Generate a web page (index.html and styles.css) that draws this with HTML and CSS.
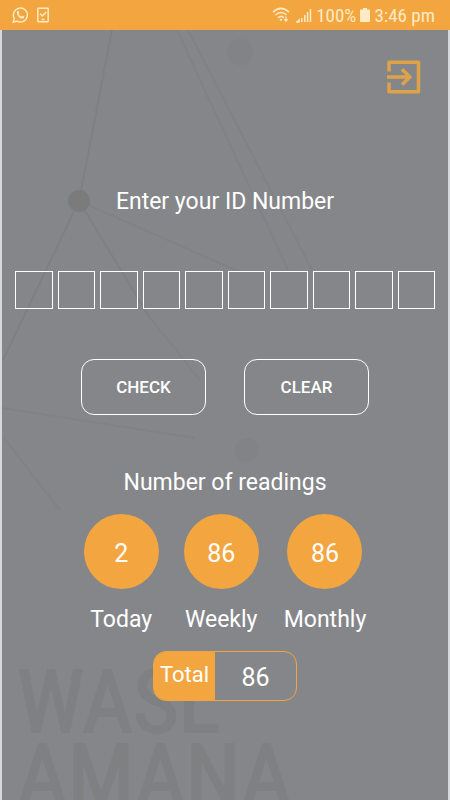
FILE: index.html
```html
<!DOCTYPE html>
<html lang="en">
<head>
<meta charset="utf-8">
<meta name="viewport" content="width=device-width, initial-scale=1">
<title>ID Check</title>
<link rel="stylesheet" href="styles.css">
</head>
<body>
<header class="status">
  <div class="status-group">
    <svg class="icon-chat" viewBox="0 0 18 18" fill="none" stroke="currentColor" stroke-width="1.5">
      <path d="M1.3 16.7l1.1-4.1a7.4 7.4 0 1 1 2.9 2.9z"/>
      <path d="M5.3 5.2c.5-.8 1.400-.8 1.700-.1l.7 1.600c.1.400-.7 1-.6 1.300.6 1.200 1.500 2 2.700 2.500.400.1.900-1 1.300-.8l1.600.8c.7.5-.2 1.900-1.100 2.200-3 .7-7.200-3.900-6.300-7.500z" fill="currentColor" stroke="none"/>
    </svg>
    <svg class="icon-task" viewBox="0 0 12 16" fill="none" stroke="currentColor" stroke-width="1.500">
      <rect x=".8" y="1.300" width="10.400" height="13.400" rx=".6"/>
      <path d="M3.200 6.800l2.200 2.200 3.800-4M4.500 12.500h3"/>
    </svg>
  </div>
  <div class="status-group status-right">
    <svg class="icon-wifi" viewBox="0 0 20 16" fill="none" stroke="currentColor" stroke-width="1.500">
      <path d="M1 5.200Q9 -2.400 17 5.200M3.500 8Q9 2.900 14.500 8M6 10.700Q9 8 12 10.700"/>
      <path d="M7.400 12.300q1.600-1.300 3.200 0L9 14.200zM11.700 12h4.600L14 15.200z" fill="currentColor" stroke="none"/>
      <path d="M14 12V9.500" stroke-width="1.200"/>
    </svg>
    <svg class="icon-signal" viewBox="0 0 16 16" fill="none" stroke="currentColor" stroke-width="1.500">
      <path d="M1 15l2-2v2zM5.800 15v-4M8.800 15V8M11.600 15V5M14.500 15V2"/>
    </svg>
    <span>100%</span>
    <svg class="icon-battery" viewBox="0 0 10 16" fill="currentColor">
      <path d="M3 1h4v1.500h2q1 0 1 1V14q0 1-1 1H1q-1 0-1-1V3.500q0-1 1-1h2z"/>
    </svg>
    <span>3:46 pm</span>
  </div>
</header>
<main class="screen">
  <svg class="backdrop" viewBox="0 0 450 770" preserveAspectRatio="xMinYMin slice" aria-hidden="true">
    <g class="mesh">
      <path d="M112 0L79 171L3 330M79 171L148 285"/>
      <path class="faint-line" d="M79 171L240 242M148 285L200 350M177 0L288 240M188 0L312 240M2 378L195 408M4 408L60 480"/>
      <circle cx="79" cy="171" r="11"/>
      <circle class="faint" cx="240" cy="22" r="13"/>
      <circle class="faint" cx="247" cy="420" r="12"/>
    </g>
    <text class="brand" x="17" y="702">WASL</text>
    <text class="brand" x="17" y="776">AMANA</text>
  </svg>
  <button class="exit" type="button" aria-label="Exit">
    <svg viewBox="0 0 34 34" fill="none" stroke="currentColor" stroke-width="3.500" stroke-linejoin="round">
      <path d="M2 11.500V2.200H31.500V31.800H2V22.500"/>
      <path d="M0 17H22.500M15 9.200L22.800 17L15 24.800" stroke-linejoin="miter"/>
    </svg>
  </button>
  <form class="form">
    <h1 class="heading" id="id-label">Enter your ID Number</h1>
    <div class="digits" role="group" aria-labelledby="id-label">
      <input class="digit" aria-label="Digit 1" inputmode="numeric" maxlength="1">
      <input class="digit" aria-label="Digit 2" inputmode="numeric" maxlength="1">
      <input class="digit" aria-label="Digit 3" inputmode="numeric" maxlength="1">
      <input class="digit" aria-label="Digit 4" inputmode="numeric" maxlength="1">
      <input class="digit" aria-label="Digit 5" inputmode="numeric" maxlength="1">
      <input class="digit" aria-label="Digit 6" inputmode="numeric" maxlength="1">
      <input class="digit" aria-label="Digit 7" inputmode="numeric" maxlength="1">
      <input class="digit" aria-label="Digit 8" inputmode="numeric" maxlength="1">
      <input class="digit" aria-label="Digit 9" inputmode="numeric" maxlength="1">
      <input class="digit" aria-label="Digit 10" inputmode="numeric" maxlength="1">
    </div>
    <div class="actions">
      <button class="action" type="button">CHECK</button>
      <button class="action" type="reset">CLEAR</button>
    </div>
  </form>
  <section class="readings">
    <h2 class="heading">Number of readings</h2>
    <div class="stats">
      <div class="stat"><span class="count">2</span><span class="label">Today</span></div>
      <div class="stat"><span class="count">86</span><span class="label">Weekly</span></div>
      <div class="stat"><span class="count">86</span><span class="label">Monthly</span></div>
    </div>
    <div class="total">
      <span class="total-label">Total</span>
      <span class="total-value">86</span>
    </div>
  </section>
</main>
</body>
</html>
```
FILE: styles.css
```css
* {
  box-sizing: border-box;
}

body {
  margin: 0;
  min-height: 100vh;
  display: flex;
  flex-direction: column;
  font-family: Roboto, "Liberation Sans", sans-serif;
  color: #fff;
  background: #85868a;
}

.status {
  height: 30px;
  padding: 0 15px 0 12px;
  display: flex;
  align-items: center;
  justify-content: space-between;
  background: #f3a63f;
  color: #fdebc8;
  font-family: "Roboto Condensed", Roboto, sans-serif;
  font-size: 19px;
}

.status-group {
  display: flex;
  align-items: center;
  gap: 8px;
}

.status-right {
  gap: 4px;
}

.icon-chat {
  width: 17px;
  height: 18px;
}

.icon-task {
  width: 12px;
  height: 16px;
}

.icon-wifi {
  width: 20px;
  height: 16px;
}

.icon-signal {
  width: 16px;
  height: 16px;
}

.icon-battery {
  width: 10px;
  height: 16px;
}

.screen {
  position: relative;
  flex: 1;
  display: flex;
  flex-direction: column;
  padding: 30px 13px 0;
  border: solid #d5d8dc;
  border-width: 0 2px;
  overflow: hidden;
}

.backdrop {
  position: absolute;
  top: 0;
  left: -2px;
  width: calc(100% + 4px);
  height: 100%;
}

.mesh {
  fill: #7b7b7c;
  stroke: #7f8083;
  stroke-width: 2;
}

.mesh path {
  fill: none;
}

.mesh .faint-line {
  stroke: #818286;
}

.mesh circle {
  stroke: none;
}

.mesh .faint {
  fill: #828387;
}

.brand {
  fill: #7f8082;
  stroke: #7f8082;
  stroke-width: 2;
  stroke-linejoin: round;
  font-family: "Liberation Sans Narrow", "Roboto Condensed", "Liberation Sans", sans-serif;
  font-size: 88px;
}

.exit,
.form,
.readings {
  position: relative;
}

.exit {
  align-self: flex-end;
  width: 34px;
  height: 34px;
  margin-right: 14px;
  padding: 0;
  border: 0;
  background: none;
  color: #dea249;
}

.exit svg {
  display: block;
}

.heading {
  margin: 0;
  font-size: 23px;
  font-weight: 400;
  line-height: 28px;
  text-align: center;
}

.form {
  margin-top: 94px;
}

.digits {
  display: flex;
  gap: 5px;
  margin-top: 55px;
}

.digit {
  flex: 1;
  min-width: 0;
  height: 38px;
  padding: 0;
  border: 1px solid #fff;
  border-radius: 0;
  background: none;
  color: #fff;
  font: 23px Roboto, sans-serif;
  text-align: center;
}

.actions {
  display: flex;
  justify-content: center;
  gap: 38px;
  margin-top: 50px;
}

.action {
  width: 125px;
  height: 56px;
  border: 1px solid #fff;
  border-radius: 13px;
  background: none;
  color: #fff;
  font: 500 17px Roboto, sans-serif;
}

.readings {
  margin-top: 54px;
}

.stats {
  display: flex;
  justify-content: center;
  gap: 25px;
  margin-top: 17px;
}

.stat {
  display: flex;
  flex-direction: column;
  align-items: center;
  gap: 17px;
}

.count {
  width: 75px;
  height: 75px;
  padding-top: 4px;
  display: flex;
  align-items: center;
  justify-content: center;
  border-radius: 50%;
  background: #f3a63f;
  font-size: 25px;
}

.label {
  font-size: 23px;
  line-height: 28px;
}

.total {
  display: flex;
  width: 144px;
  height: 50px;
  margin: 17px auto 0;
  border: 1px solid #f3a63f;
  border-radius: 13px;
  overflow: hidden;
}

.total-label {
  padding: 9px 6px 0;
  background: #f3a63f;
  font-size: 22px;
  line-height: 28px;
}

.total-value {
  flex: 1;
  padding-top: 2px;
  font-size: 25px;
  line-height: 48px;
  text-align: center;
}
```
